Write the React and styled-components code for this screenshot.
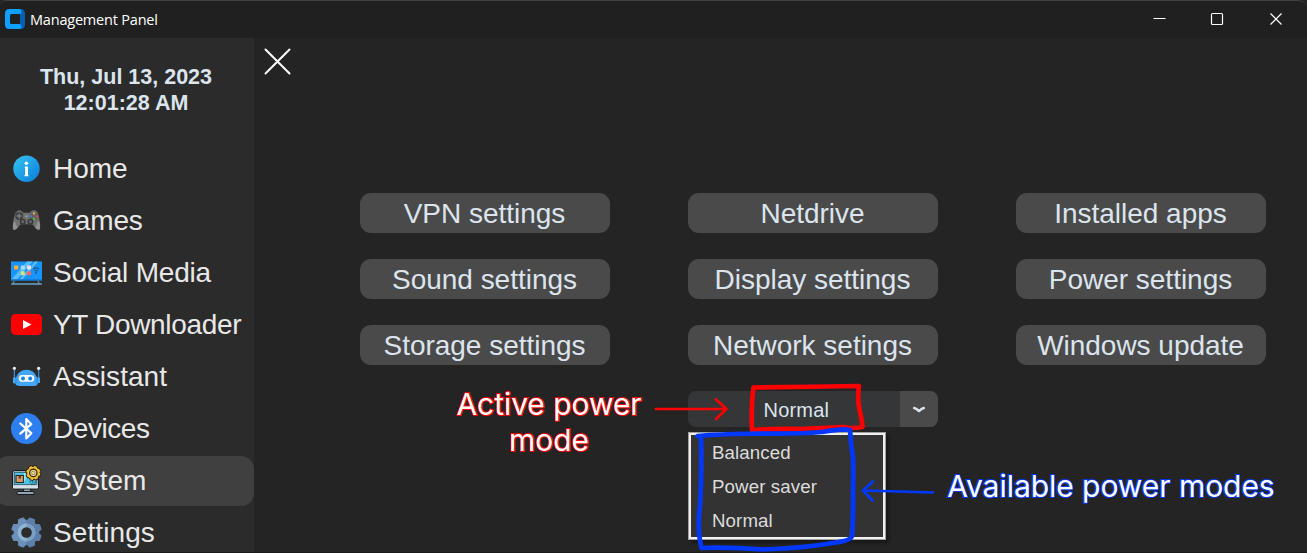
import React from 'react';
import styled, { createGlobalStyle } from 'styled-components';

const GlobalStyle = createGlobalStyle`
  * { box-sizing: border-box; }
  body { margin: 0; background: #242424; overflow: hidden; }
`;

const Window = styled.div`
  position: relative;
  width: 1307px;
  height: 553px;
  display: flex;
  flex-direction: column;
  overflow: hidden;
  background: #242424;
  font-family: 'Liberation Sans', Arial, sans-serif;
  color: #dce4ee;
  border-bottom: 1px solid #1a1a1a;
`;

const TitleBar = styled.header`
  height: 38px;
  flex: none;
  display: flex;
  align-items: flex-start;
  padding-left: 5px;
  background: #202020;
  border-top: 1px solid #414141;
  border-top-right-radius: 9px;
  border-top-left-radius: 6px;
`;

const Title = styled.span`
  flex: 1;
  margin: 8px 0 0 5px;
  font: 14.5px/22px 'Open Sans', 'Noto Sans', sans-serif;
  letter-spacing: -0.2px;
  color: #fff;
`;

const WindowControls = styled.div`
  display: flex;
  svg { width: 58.5px; height: 36px; display: block; }
`;

const Body = styled.div`
  flex: 1;
  display: flex;
  min-height: 0;
`;

const Sidebar = styled.aside`
  width: 254px;
  flex: none;
  background: #2b2b2b;
  overflow: hidden;
`;

const Clock = styled.div`
  padding: 26px 2px 0 0;
  height: 106px;
  text-align: center;
  font-size: 21.5px;
  line-height: 26px;
  font-weight: bold;
`;

const NavItem = styled.div`
  height: 50px;
  margin: 0 0 2px -5px;
  padding-left: 15px;
  display: flex;
  align-items: center;
  border-radius: 13px;
  background: ${(p) => (p.$active ? '#404040' : 'transparent')};
  font-size: 28px;
  line-height: 32px;
  letter-spacing: ${(p) => p.$spacing}px;
  color: #e8e8e8;
  white-space: nowrap;
  svg { width: 32px; height: 32px; flex: none; margin-right: 11px; }
`;

const Content = styled.main`
  flex: 1;
  display: flex;
  flex-direction: column;
  align-items: flex-start;
`;

const CloseIcon = styled.svg`
  width: 28px;
  height: 28px;
  margin: 9px 0 118px 9px;
`;

const ButtonGrid = styled.div`
  margin-left: 106px;
  display: grid;
  grid-template-columns: repeat(3, 250px);
  column-gap: 78px;
  row-gap: 26px;
`;

const Button = styled.button`
  height: 40px;
  border: 0;
  padding: 1px 1px 0 0;
  border-radius: 11px;
  background: #4a4a4a;
  color: #dce4ee;
  font: 28px/40px 'Liberation Sans', Arial, sans-serif;
  letter-spacing: -0.02px;
  white-space: nowrap;
`;

const PowerSelect = styled.div`
  grid-column: 2;
  position: relative;
  height: 36px;
  display: flex;
  border-radius: 8px;
  background: #343638;
`;

const SelectValue = styled.span`
  flex: 1;
  padding-left: 75.5px;
  font-size: 20px;
  line-height: 38px;
  letter-spacing: 0.2px;
`;

const SelectArrow = styled.span`
  width: 38px;
  display: flex;
  align-items: center;
  justify-content: center;
  border-radius: 0 8px 8px 0;
  background: #4a4a4a;
`;

const Menu = styled.div`
  position: absolute;
  left: 0;
  top: 41px;
  width: 198px;
  height: 108px;
  padding: 1px 0 0 21px;
  background: #333;
  border: 1px solid #a0a0a0;
  box-shadow: inset 0 0 0 2px #f0f0f0, 3px 3px 3px rgba(0, 0, 0, 0.35);
`;

const MenuItem = styled.div`
  padding: 1px 0 0 2px;
  height: 34px;
  font-size: 18.7px;
  line-height: 36px;
  letter-spacing: 0.1px;
  color: #dcdcdc;
`;

const Note = styled.div`
  position: absolute;
  left: ${(p) => p.$x}px;
  top: ${(p) => p.$y}px;
  width: ${(p) => p.$width}px;
  text-align: center;
  font: 30px/36px Inter, sans-serif;
  letter-spacing: -0.04px;
  color: #fff;
  -webkit-text-stroke: 2px ${(p) => p.$color};
  paint-order: stroke fill;
  white-space: nowrap;
`;

const Ink = styled.svg`
  position: absolute;
  inset: 0;
  width: 1307px;
  height: 553px;
  pointer-events: none;
  fill: none;
  stroke-linecap: round;
  stroke-linejoin: round;
`;

const LogoMark = styled.svg`
  width: 20px;
  height: 20px;
  margin-top: 8px;
`;

const AppLogo = () => (
  <LogoMark viewBox="0 0 20 20">
    <path d="M12 0H15.5Q20 0 20 4.5V15.5Q20 20 15.5 20H12V15H15V5H12Z" fill="#0560ad" />
    <path d="M4.5 0H14.5Q16.5 0 16.5 2.5T14.5 5H6.5Q5 5 5 6.5V13.5Q5 15 6.5 15H14.5Q16.5 15 16.5 17.5T14.5 20H4.5Q0 20 0 15.5V4.5Q0 0 4.5 0Z" fill="#0ea0ff" />
  </LogoMark>
);

const InfoIcon = () => (
  <svg viewBox="0 0 32 32">
    <defs>
      <linearGradient id="info" x1="0" y1="0" x2="1" y2="1">
        <stop stopColor="#36c5f0" /><stop offset="1" stopColor="#087bd9" />
      </linearGradient>
    </defs>
    <circle cx="16.5" cy="15.7" r="13.2" fill="url(#info)" />
    <circle cx="16.4" cy="10.3" r="1.8" fill="#fff" />
    <path d="M14.8 13.6H18V22H18.4V23.3H14.4V22H15.1V15H14.8Z" fill="#fff" />
  </svg>
);

const GamepadIcon = () => (
  <svg viewBox="0 1.3 32 32">
    <path d="M7 7.5Q9.5 5.5 12 7.7L13.5 9H19.5L21 7.7Q24 5.5 26.5 7.5Q28.6 9 29.4 16Q31 24 29.5 25.8Q27.7 27.3 25 23.8L22.3 20.5H10.7L8 23.8Q5 27.3 3.4 25.7Q2 24 3.7 16Q4.6 9 7 7.5Z" fill="#707070" />
    <path d="M4 17Q1.9 24 3.4 25.7Q5 27 7.5 24L5.5 19ZM29 17Q31 24 29.5 25.8Q27.8 27 25.3 24L27.3 19Z" fill="#929292" />
    <circle cx="9.2" cy="12.3" r="4" fill="#3d4145" />
    <path d="M9.2 9.7V14.9M6.6 12.3H11.8" stroke="#797979" strokeWidth="1.6" />
    <circle cx="23.9" cy="12.3" r="3.9" fill="#575b60" />
    <circle cx="24" cy="9.7" r="1.2" fill="#edb43b" />
    <circle cx="21.5" cy="12.4" r="1.2" fill="#3889e5" />
    <circle cx="26.4" cy="12.4" r="1.2" fill="#ed4545" />
    <circle cx="24" cy="15" r="1.2" fill="#66b947" />
    <circle cx="12.8" cy="18" r="3" fill="#36393c" /><circle cx="20.4" cy="18" r="3" fill="#36393c" />
    <circle cx="12.8" cy="18" r="1.6" fill="#62666a" /><circle cx="20.4" cy="18" r="1.6" fill="#62666a" />
    <path d="M15 12.5H18" stroke="#aaa" />
  </svg>
);

const TvIcon = () => (
  <svg viewBox="0 0 32 32">
    <rect x="1" y="4.5" width="31" height="19" fill="#1795ff" />
    <path d="M17 4.5H22.5L7 22.5H1.5ZM25 4.5H28L12.5 22.5H9.5Z" fill="#56bffb" />
    <path d="M1 22.4H32V23.7H1Z" fill="#166fc0" />
    <rect x="4" y="8.5" width="4.2" height="4" rx="0.7" fill="#ffab2e" />
    <rect x="10.8" y="8.5" width="4" height="4" rx="0.7" fill="#a9dcea" />
    <rect x="17" y="8.5" width="4" height="4" rx="0.7" fill="#f6dddb" />
    <rect x="10.8" y="14.3" width="4" height="4" rx="0.7" fill="#d6e178" />
    <rect x="17" y="14.3" width="4" height="4" rx="0.7" fill="#ff655f" />
    <path d="M23.2 12Q26 10 29 12M24.3 14Q26 12.6 27.8 14" fill="none" stroke="#245c91" strokeWidth="1.3" />
    <circle cx="26" cy="15.7" r="1" fill="#245c91" />
    <path d="M4.3 23.9L2.8 26.9M27.8 23.9L29.5 26.9" stroke="#527f98" strokeWidth="1.3" />
    <path d="M1.2 27H31.8" stroke="#6ba6c5" strokeWidth="1.5" />
  </svg>
);

const VideoIcon = () => (
  <svg viewBox="0 0 32 32">
    <rect x="1" y="5" width="31" height="21" rx="4.5" fill="#f00" />
    <path d="M13 11L21.5 15.5L13 20Z" fill="#fff" />
  </svg>
);

const RobotIcon = () => (
  <svg viewBox="0 0 32 32">
    <path d="M4.4 7V17M28.6 7V17" stroke="#3489d0" strokeWidth="1.3" />
    <circle cx="4.4" cy="7.3" r="1.6" fill="#f4f4f4" /><circle cx="28.6" cy="7.3" r="1.6" fill="#f4f4f4" />
    <path d="M3 16.5H6Q8.8 8.7 16.5 8.7T27 16.5H30V22H28Q27.2 25 24.5 25H8.5Q5.8 25 5 22.3H3Z" fill="#42a5f5" />
    <path d="M6 16.5V22M27 16.5V22" stroke="#297ec7" strokeWidth="0.8" />
    <rect x="8.8" y="14" width="15.5" height="6.8" rx="3.4" fill="#f3f8fb" />
    <circle cx="13" cy="17.4" r="2" fill="#1784dc" /><circle cx="20.2" cy="17.4" r="2" fill="#1784dc" />
  </svg>
);

const BluetoothIcon = () => (
  <svg viewBox="0 0 32 32">
    <circle cx="16.5" cy="15.6" r="15.5" fill="#2d7ff0" />
    <path d="M10.3 10.5L21.3 20.2L16.3 25.4V6L21.3 11.2L10.3 20.7" fill="none" stroke="#fff" strokeWidth="2.2" strokeLinecap="round" strokeLinejoin="round" />
  </svg>
);

const SystemIcon = () => (
  <svg viewBox="0 0 32 32">
    <path d="M14 23H20L21 27H13Z" fill="#91a4b3" stroke="#15191d" />
    <rect x="2.5" y="5.5" width="26" height="18.5" rx="2" fill="#9eafbd" stroke="#15191d" />
    <rect x="4.6" y="7.6" width="21.8" height="12" fill="#4bc5e5" stroke="#275261" strokeWidth="0.7" />
    <path d="M14 8H20L14 17Z" fill="#8de6f5" />
    <path d="M3 20.3H28V23.3H3Z" fill="#d5e0e8" />
    <rect x="6" y="10.5" width="7.4" height="7" fill="#d69c67" stroke="#27211e" />
    <path d="M8.6 10.8H11V14L9.8 13.2L8.6 14Z" fill="#623f29" />
    <path d="M19.5 17H26M21 19.2H26" stroke="#173944" strokeDasharray="1.5 1" />
    <path d="M8 26.5H23Q24.5 26.5 24 29.5H7Q6.5 26.5 8 26.5Z" fill="#94a4b0" stroke="#15191d" />
    <circle cx="23.3" cy="7.9" r="7.3" fill="#2d2511" stroke="#2d2511" strokeWidth="1.6" strokeDasharray="3.7 2" />
    <circle cx="23.3" cy="7.9" r="6.2" fill="#f3c133" stroke="#f3c133" strokeWidth="1.6" strokeDasharray="2.7 2.17" />
    <circle cx="23.3" cy="7.9" r="3.7" fill="#e6ce8a" stroke="#30260f" strokeWidth="1.2" />
    <circle cx="23.3" cy="7.9" r="1.7" fill="#efdc9d" stroke="#806424" strokeWidth="0.6" />
  </svg>
);

const GearIcon = () => {
  const teeth = Array.from({ length: 8 }, (_, i) => i * 45 + 22.5);
  return (
    <svg viewBox="0 0 32 32">
      <defs>
        <linearGradient id="gear"><stop offset="0.5" stopColor="#6b91ba" /><stop offset="0.5" stopColor="#5b7fa8" /></linearGradient>
        <mask id="teeth">
          <circle cx="16.5" cy="15.5" r="12.7" fill="#fff" />
          {teeth.map((a) => <path key={a} d="M12.9 4L13.8.8Q16.5.2 19.2.8L20.1 4Z" fill="#fff" stroke="#fff" strokeLinejoin="round" transform={`rotate(${a} 16.5 15.5)`} />)}
          <circle cx="16.5" cy="15.5" r="5.3" fill="#000" />
        </mask>
      </defs>
      <g mask="url(#teeth)">
        <path d="M0 0H33V32H0Z" fill="url(#gear)" />
        <circle cx="16.5" cy="15.5" r="9" fill="#90b4d4" />
        <path d="M16.5 6.5A9 9 0 0 1 16.5 24.5Z" fill="#799fc5" />
      </g>
    </svg>
  );
};

const navItems = [
  ['Home', InfoIcon, 0], ['Games', GamepadIcon, -0.1], ['Social Media', TvIcon, -0.2], ['YT Downloader', VideoIcon, -0.33],
  ['Assistant', RobotIcon, 0.05], ['Devices', BluetoothIcon, -0.45], ['System', SystemIcon, 0], ['Settings', GearIcon, 0.1],
];

const actions = [
  'VPN settings', 'Netdrive', 'Installed apps', 'Sound settings', 'Display settings', 'Power settings',
  'Storage settings', 'Network setings', 'Windows update',
];

export default function App() {
  return (
    <>
      <GlobalStyle />
      <Window>
        <TitleBar>
          <AppLogo />
          <Title>Management Panel</Title>
          <WindowControls>
            <svg viewBox="0 0 58.5 36"><path d="M21.5 17.5H33.5" stroke="#fff" /></svg>
            <svg viewBox="0 0 58.5 36"><rect x="21.5" y="12.5" width="11" height="11" rx="1" fill="none" stroke="#fff" strokeWidth="1.2" /></svg>
            <svg viewBox="0 0 58.5 36"><path d="M21.5 12.5L32.5 23.5M32.5 12.5L21.5 23.5" stroke="#fff" strokeWidth="1.2" /></svg>
          </WindowControls>
        </TitleBar>
        <Body>
          <Sidebar>
            <Clock>Thu, Jul 13, 2023<br />12:01:28 AM</Clock>
            {navItems.map(([label, Icon, spacing]) => (
              <NavItem key={label} $active={label === 'System'} $spacing={spacing}><Icon />{label}</NavItem>
            ))}
          </Sidebar>
          <Content>
            <CloseIcon viewBox="0 0 28 28"><path d="M2.5 2.5L26.5 26.5M26.5 2.5L2.5 26.5" stroke="#fff" strokeWidth="2" strokeLinecap="round" /></CloseIcon>
            <ButtonGrid>
              {actions.map((label) => <Button key={label}>{label}</Button>)}
              <PowerSelect>
                <SelectValue>Normal</SelectValue>
                <SelectArrow>
                  <svg width="14" height="10" viewBox="0 0 14 10"><path d="M2.2 4.1Q4 4.3 7 7Q10 4.3 11.8 4.1" fill="none" stroke="#dce4ee" strokeWidth="2.5" strokeLinecap="round" strokeLinejoin="round" /></svg>
                </SelectArrow>
                <Menu>
                  <MenuItem>Balanced</MenuItem>
                  <MenuItem>Power saver</MenuItem>
                  <MenuItem>Normal</MenuItem>
                </Menu>
              </PowerSelect>
            </ButtonGrid>
          </Content>
        </Body>
        <Ink viewBox="0 0 1307 553">
          <g stroke="#f00">
            <path d="M656 409H726M716 399.5L726.5 409L716 419" strokeWidth="2.7" />
            <path d="M753.5 387.5Q806 387 859 386Q857 400 860 412Q862 420 862.5 427Q852 429 843 427Q820 428 800 429Q775 428.5 752 430Q751 405 753.5 387.5" strokeWidth="4.7" />
          </g>
          <g stroke="#0038ff">
            <path d="M933 492.5L863 490.5M873 481.5L863 490.5L872.5 500.5" strokeWidth="2.7" />
            <path d="M697.5 436Q720 434 758 433.5Q798 434 822 432Q843 428 850 430Q851 445 853 458Q853.5 475 853 490Q853.5 515 852 536Q851 541 832 543Q805 548 763 549.5Q730 547 701.5 548Q697 530 700 505Q702 470 701 437" strokeWidth="4.7" />
          </g>
        </Ink>
        <Note $x={449} $y={386} $width={200} $color="#f00">Active power<br />mode</Note>
        <Note $x={941} $y={468} $width={340} $color="#0038ff">Available power modes</Note>
      </Window>
    </>
  );
}
